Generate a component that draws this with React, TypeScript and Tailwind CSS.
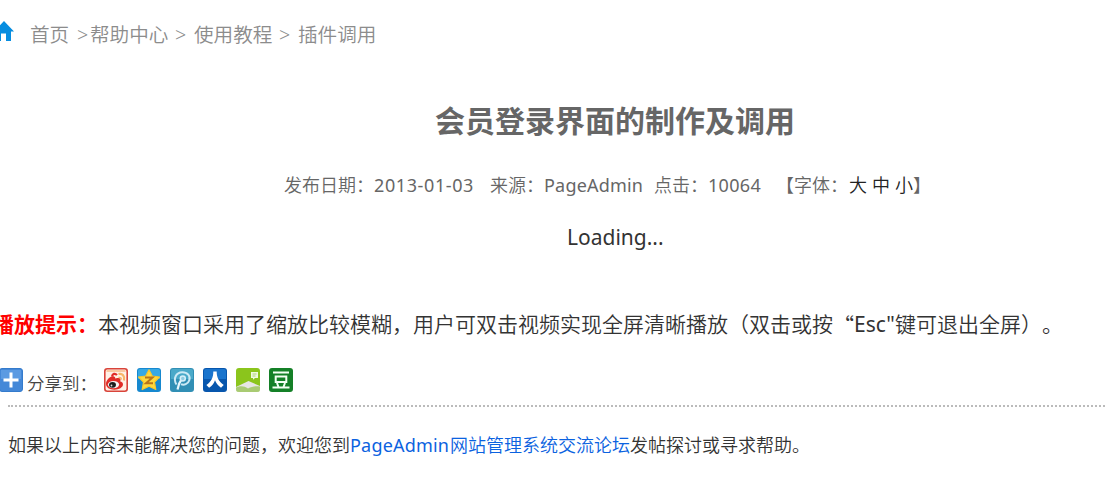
const shareIcons = [
  {
    name: "weibo",
    art: (
      <>
        <rect x="0.8" y="0.8" width="22.4" height="22.4" rx="2.5" fill="#fff0e6" stroke="#d9443a" strokeWidth="1.6" />
        <path d="M2.5 3h19" stroke="#f3a25c" strokeWidth="1" />
        <path d="M2 16c0-4 4.500-8.500 8-7.500 1.500.4 1.300 2 1.300 2s4.700-1.700 5.200.8c.3 1.200-.5 2-.5 2s3 .7 3 3c0 3.200-4 5.400-8.700 5.400S2 19.500 2 16z" fill="#e02c27" />
        <path d="M8 8.500C8.500 5.500 11 5 13 7" fill="none" stroke="#e02c27" strokeWidth="2.200" />
        <ellipse cx="9.500" cy="16.600" rx="5.600" ry="3.700" fill="#f4f4f4" />
        <ellipse cx="8.500" cy="16.800" rx="3.500" ry="2.900" fill="#1c1c1c" />
        <circle cx="7.500" cy="17.500" r="0.9" fill="#ddd" />
        <path d="M14.500 6c4-1 6.500 2 5.500 6.500" fill="none" stroke="#f7b668" strokeWidth="2.200" />
        <path d="M14.500 9.500c2-.4 3 .7 2.700 2.200" fill="none" stroke="#f7b668" strokeWidth="1.500" />
      </>
    ),
  },
  {
    name: "qzone",
    art: (
      <>
        <rect width="24" height="24" rx="3" fill="#1688cf" />
        <path d="M1 3q0-2 2-2h18q2 0 2 2v8H1z" fill="#36a8e4" />
        <path d="M12 1.800l3.300 6.200 7.200 1-5 5.200 1.300 7.300-6.800-3.300-6.800 3.300 1.300-7.300-5-5.200 7.200-1z" fill="#ffd83c" stroke="#f7c72c" strokeWidth="1.200" strokeLinejoin="round" />
        <path d="M8 9.500h7.500L9 15.200h7" fill="none" stroke="#b8741a" strokeWidth="2" />
      </>
    ),
  },
  {
    name: "tencent",
    art: (
      <>
        <rect width="24" height="24" rx="3" fill="#318fb5" />
        <path d="M1 3q0-2 2-2h18q2 0 2 2v8H1z" fill="#4aa9c9" />
        <path d="M6.500 16.500C2.800 11 6 4.200 12.300 4.200c5.200 0 8.400 3.800 7 8-1.200 3.800-5.500 5.400-8.300 3.900" fill="none" stroke="#cdeaf5" strokeWidth="2" />
        <path d="M7.500 21.500c.7-4.500 2-7.500 4-10" fill="none" stroke="#e8f7fd" strokeWidth="2.200" />
        <circle cx="12.800" cy="10.500" r="2.500" fill="#8fcbe2" stroke="#d6eff8" strokeWidth="1.500" />
      </>
    ),
  },
  {
    name: "renren",
    art: (
      <>
        <rect width="24" height="24" rx="3" fill="#0756ad" />
        <path d="M1 3q0-2 2-2h18q2 0 2 2v8H1z" fill="#1974cd" />
        <path d="M10.300 3.500h3.400c0 6 1.700 9.500 7 13.500l-2.700 2.800c-3-2.200-5-4.700-6-7.500-1 3-2.900 5.600-5.900 7.500L3.400 17c5-3.600 6.900-7.500 6.900-13.500z" fill="#fff" />
      </>
    ),
  },
  {
    name: "kaixin",
    art: (
      <>
        <rect width="24" height="24" rx="3" fill="#8bc51c" />
        <path d="M0 19L12.500 13 24 18v3q0 3-3 3H3q-3 0-3-3z" fill="#e6e6e4" />
        <path d="M0 19.500c5-2 8-1.500 12 1 4-2 8-2.500 12-2V21q0 3-3 3H3q-3 0-3-3z" fill="#a9cb73" />
        <path d="M15 4h7v6h-3l-2 1.800V10h-2z" fill="#eef8de" />
        <path d="M16.500 6h4M16.500 8h3" stroke="#9dc85a" strokeWidth="0.8" />
      </>
    ),
  },
  {
    name: "douban",
    art: (
      <>
        <rect width="24" height="24" rx="3" fill="#148027" />
        <path d="M4 4.500h16M3.500 19.500h17M8 15l1.500 4M16 15l-1.500 4" stroke="#f3fff3" strokeWidth="2" />
        <path d="M6.700 8.500h10.600v5.500H6.700z" fill="none" stroke="#f3fff3" strokeWidth="2" />
      </>
    ),
  },
];

function HomeIcon() {
  return (
    <svg className="-ml-[6px] mt-[21px] h-5 w-5 shrink-0" viewBox="0 0 20 20" fill="#078de0">
      <path d="M10 0L0 10.500h2.500V20H7v-7.500h5V20h5v-9.500h3z" />
    </svg>
  );
}

function PlusIcon() {
  return (
    <svg className="-ml-px h-6 w-6 shrink-0" viewBox="0 0 24 24">
      <rect x="0.500" y="0.500" width="23" height="23" rx="2.500" fill="#4488d8" stroke="#347bcc" />
      <path d="M2 2h20v9H2z" fill="#5b9ae2" />
      <path d="M12 4.500v15M4.500 12h15" stroke="#fff" strokeWidth="3" />
    </svg>
  );
}

export default function App() {
  return (
    <div
      lang="zh-CN"
      className="h-[482px] w-full overflow-hidden bg-white font-['Noto_Sans','Noto_Sans_CJK_SC',sans-serif] font-[350] whitespace-pre text-[#333] [text-spacing-trim:space-all]"
    >
      <nav className="flex h-[70px] items-start text-[19.6px] leading-[70px] text-[#8c8c8c]">
        <HomeIcon />
        <span className="ml-4 w-[47px]">首页</span>
        <span className="w-[13px]">&gt;</span>
        <span className="w-[85px]">帮助中心</span>
        <span className="w-[19px]">&gt;</span>
        <span className="w-[85px]">使用教程</span>
        <span className="w-[19px]">&gt;</span>
        <span>插件调用</span>
      </nav>

      <h1 className="pl-[435px] text-[30px] leading-[101px] font-bold text-[#666]">会员登录界面的制作及调用</h1>

      <div className="flex h-[28px] pl-[284px] text-[18px] leading-[28px] text-[#666]">
        <span className="w-[90px]">发布日期：</span>
        <span className="w-[116px] font-normal tracking-[0.6px]">2013-01-03</span>
        <span className="w-[54px]">来源：</span>
        <span className="w-[110px] font-normal tracking-[0.2px]">PageAdmin</span>
        <span className="w-[54px]">点击：</span>
        <span className="w-[68px] font-normal tracking-[0.3px]">10064</span>
        <span className="w-[73px]">【字体：</span>
        <span className="w-[23px] text-[#222]">大</span>
        <span className="w-[23px] text-[#222]">中</span>
        <span className="text-[#222]">小</span>
        <span>】</span>
      </div>

      <div className="pt-[22px] pl-[567px] text-[21px] leading-8 font-normal">Loading...</div>

      <p className="-ml-[7px] flex pt-[53px] text-[21px] leading-[36px]">
        <strong className="font-bold text-[#f00]">播放提示：</strong>
        <span>本视频窗口采用了缩放比较模糊，用户可双击视频实现全屏清晰播放（双击或按</span>
        <span className="w-[21px] text-right font-['Noto_Sans_CJK_SC',sans-serif]">“</span>
        <span className="w-[41px] font-normal">Esc"</span>
        <span>键可退出全屏）。</span>
      </p>

      <div className="flex h-[63px] items-start pt-[26px]">
        <PlusIcon />
        <span className="ml-1 w-[77px] text-[17.500px] leading-[31px] text-[#444]">分享到：</span>
        <div className="flex gap-[9px]">
          {shareIcons.map((icon) => (
            <svg key={icon.name} className="h-6 w-6" viewBox="0 0 24 24">
              {icon.art}
            </svg>
          ))}
        </div>
      </div>

      <div className="ml-2 border-t-2 border-dotted border-[#bbb] pt-[23px] text-[18px] leading-[30px]">
        <p className="flex">
          <span>如果以上内容未能解决您的问题，欢迎您到</span>
          <a className="text-[#0b62e0]">
            <span className="inline-block w-[100px] font-normal tracking-[0.2px]">PageAdmin</span>网站管理系统交流论坛
          </a>
          <span>发帖探讨或寻求帮助。</span>
        </p>
      </div>
    </div>
  );
}
